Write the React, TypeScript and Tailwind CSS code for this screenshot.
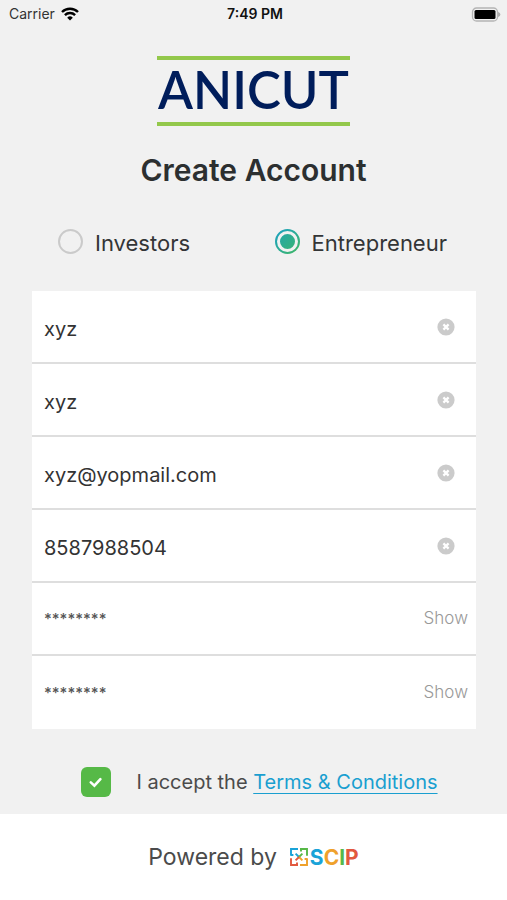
import { useState } from "react";

const clearableFields = [
  { id: "first-name", label: "First name", type: "text", value: "xyz" },
  { id: "last-name", label: "Last name", type: "text", value: "xyz" },
  { id: "email", label: "Email", type: "email", value: "xyz@yopmail.com" },
  { id: "phone", label: "Phone number", type: "tel", value: "8587988504" },
];

const passwordFields = [
  { id: "password", label: "Password" },
  { id: "confirm-password", label: "Confirm password" },
];

function WifiIcon() {
  return (
    <svg viewBox="0 0 18 14" className="h-[14px] w-[18px]" aria-hidden>
      <path d="M9 13.6 6.2 10.7a4 4 0 0 1 5.6 0Z" fill="#000" />
      <path
        d="M3.9 8.1a7.2 7.2 0 0 1 10.2 0M1 5a11.3 11.3 0 0 1 16 0"
        fill="none"
        stroke="#000"
        strokeWidth="2.4"
      />
    </svg>
  );
}

function BatteryIcon() {
  return (
    <svg viewBox="0 0 31 15" className="h-[15px] w-[31px]" aria-hidden>
      <rect x="2.5" y="1" width="25" height="13" rx="4" fill="none" stroke="#b4b4b4" strokeWidth="1.3" />
      <rect x="4.5" y="3" width="21" height="9" rx="1.5" fill="#000" />
      <path d="M28.6 5.4a2.4 2.4 0 0 1 0 4.2Z" fill="#a9a9a9" stroke="#a9a9a9" />
    </svg>
  );
}

function StatusBar() {
  return (
    <div className="grid grid-cols-3 items-center pt-1 pr-[6px] pl-[9px] leading-5 text-[#111]">
      <div className="flex items-center gap-[6px] text-sm text-[#333]">
        Carrier
        <WifiIcon />
      </div>
      <div className="text-center text-sm font-semibold whitespace-nowrap">7:49 PM</div>
      <div className="flex justify-end">
        <BatteryIcon />
      </div>
    </div>
  );
}

function AnicutLogo() {
  return (
    <div className="mx-auto mt-8 flex h-[70px] w-[193px] items-center justify-center border-y-4 border-[#93c84b] pb-1 font-['Lato',sans-serif] text-[51px] leading-none font-semibold text-[#001d5b]">
      ANICUT
    </div>
  );
}

function ClearIcon() {
  return (
    <svg viewBox="0 0 18 18" className="size-[18px]" aria-hidden>
      <circle cx="9" cy="9" r="8.6" fill="#cbcbcb" />
      <path d="m6.4 6.4 5.2 5.2m0-5.2-5.2 5.2" stroke="#fff" strokeWidth="2.2" />
    </svg>
  );
}

function ScipMark() {
  return (
    <svg viewBox="0 0 18 18" className="size-[18px]" fill="none" strokeWidth="1.9" aria-hidden>
      <path d="M8 1H1v6.8M1 7h2.4" stroke="#1aa3d8" />
      <path d="M10 1h7v6.8M11 1v2.4" stroke="#57b847" />
      <path d="M10 17h7v-6.8M17 11h-2.4" stroke="#efa12b" />
      <path d="M8 17H1v-6.8M7 17v-2.4" stroke="#e2583e" />
      <path d="m5.6 5.6 3.4 3.4" stroke="#1aa3d8" />
      <path d="M12.4 5.6 9 9" stroke="#57b847" />
      <path d="M12.4 12.4 9 9" stroke="#efa12b" />
      <path d="M5.6 12.4 9 9" stroke="#e2583e" />
    </svg>
  );
}

function RadioOption({ label, checked, onSelect }: { label: string; checked: boolean; onSelect: () => void }) {
  return (
    <label className="flex cursor-pointer items-center gap-3 text-[22px] leading-7 text-[#333536]">
      <span className="relative size-[25px]">
        <input
          type="radio"
          name="account-type"
          checked={checked}
          onChange={onSelect}
          className="peer block size-[25px] appearance-none rounded-full border-2 border-[#cacaca] checked:border-0 checked:bg-linear-to-br checked:from-[#1b9fc4] checked:to-[#43b75a]"
        />
        <span className="pointer-events-none absolute inset-[2px] hidden rounded-full border-[3px] border-[#f1f1f1] bg-linear-to-br from-[#23a5ad] to-[#3bb46c] bg-origin-border peer-checked:block" />
      </span>
      <span className="pt-[3px]">{label}</span>
    </label>
  );
}

export default function App() {
  const [accountType, setAccountType] = useState("Entrepreneur");
  const [values, setValues] = useState(clearableFields.map((field) => field.value));
  const [accepted, setAccepted] = useState(true);

  const setValue = (index: number, value: string) =>
    setValues((current) => current.map((item, i) => (i === index ? value : item)));

  return (
    <div className="flex min-h-screen flex-col bg-[#f1f1f1] font-['Inter',sans-serif]">
      <StatusBar />
      <main className="flex flex-1 flex-col">
        <AnicutLogo />
        <h1 className="mt-6 text-center text-[30px] leading-10 font-semibold text-[#2c2f30]">Create Account</h1>

        <form>
          <div className="mt-9 flex justify-between pr-[60px] pl-[58px]">
            {["Investors", "Entrepreneur"].map((type) => (
              <RadioOption
                key={type}
                label={type}
                checked={accountType === type}
                onSelect={() => setAccountType(type)}
              />
            ))}
          </div>

          <div className="mr-[31px] ml-8 mt-[34px] divide-y-2 divide-[#dedede] bg-white">
            {clearableFields.map((field, index) => (
              <div key={field.id} className="flex h-[73px] items-center pr-[21px] pl-3">
                <input
                  id={field.id}
                  type={field.type}
                  aria-label={field.label}
                  value={values[index]}
                  onChange={(event) => setValue(index, event.target.value)}
                  className="min-w-0 flex-1 pt-1 text-xl leading-7 text-[#333] outline-none"
                />
                <button type="button" aria-label={`Clear ${field.label}`} onClick={() => setValue(index, "")}>
                  <ClearIcon />
                </button>
              </div>
            ))}
            {passwordFields.map((field) => (
              <div key={field.id} className="flex h-[73px] items-center pr-2 pl-3">
                <input
                  id={field.id}
                  type="text"
                  aria-label={field.label}
                  defaultValue="********"
                  className="min-w-0 flex-1 text-[15px] leading-7 font-medium text-[#555] outline-none"
                />
                <button type="button" className="text-[17px] font-light text-[#999]">
                  Show
                </button>
              </div>
            ))}
          </div>

          <div className="mt-[38px] mb-[17px] flex items-center justify-center gap-[25px] pl-3">
            <span className="relative size-[30px]">
              <input
                id="terms"
                type="checkbox"
                checked={accepted}
                onChange={(event) => setAccepted(event.target.checked)}
                className="peer block size-[30px] appearance-none rounded-md border-2 border-[#cacaca] bg-white checked:border-0 checked:bg-[#56b947]"
              />
              <svg
                viewBox="0 0 30 30"
                className="pointer-events-none absolute inset-0 hidden peer-checked:block"
                aria-hidden
              >
                <path d="m9.8 15.4 3.6 3.2 6-6.4" fill="none" stroke="#fff" strokeWidth="2.6" strokeLinecap="round" />
              </svg>
            </span>
            <label htmlFor="terms" className="text-xl leading-7 text-[#4b4b4b]">
              I accept the{" "}
              <a href="#terms" className="text-[#1a9fd0] underline decoration-1 underline-offset-4">
                Terms &amp; Conditions
              </a>
            </label>
          </div>
        </form>
      </main>

      <footer className="flex h-[86px] items-center justify-center gap-[13px] bg-white text-[23px] text-[#4b4b4b]">
        Powered by
        <span className="flex items-center gap-[2px] text-[21px] leading-none font-bold">
          <ScipMark />
          <span>
            <span className="text-[#1aa3d8]">S</span>
            <span className="text-[#efa12b]">C</span>
            <span className="text-[#57b847]">I</span>
            <span className="text-[#e2583e]">P</span>
          </span>
        </span>
      </footer>
    </div>
  );
}
